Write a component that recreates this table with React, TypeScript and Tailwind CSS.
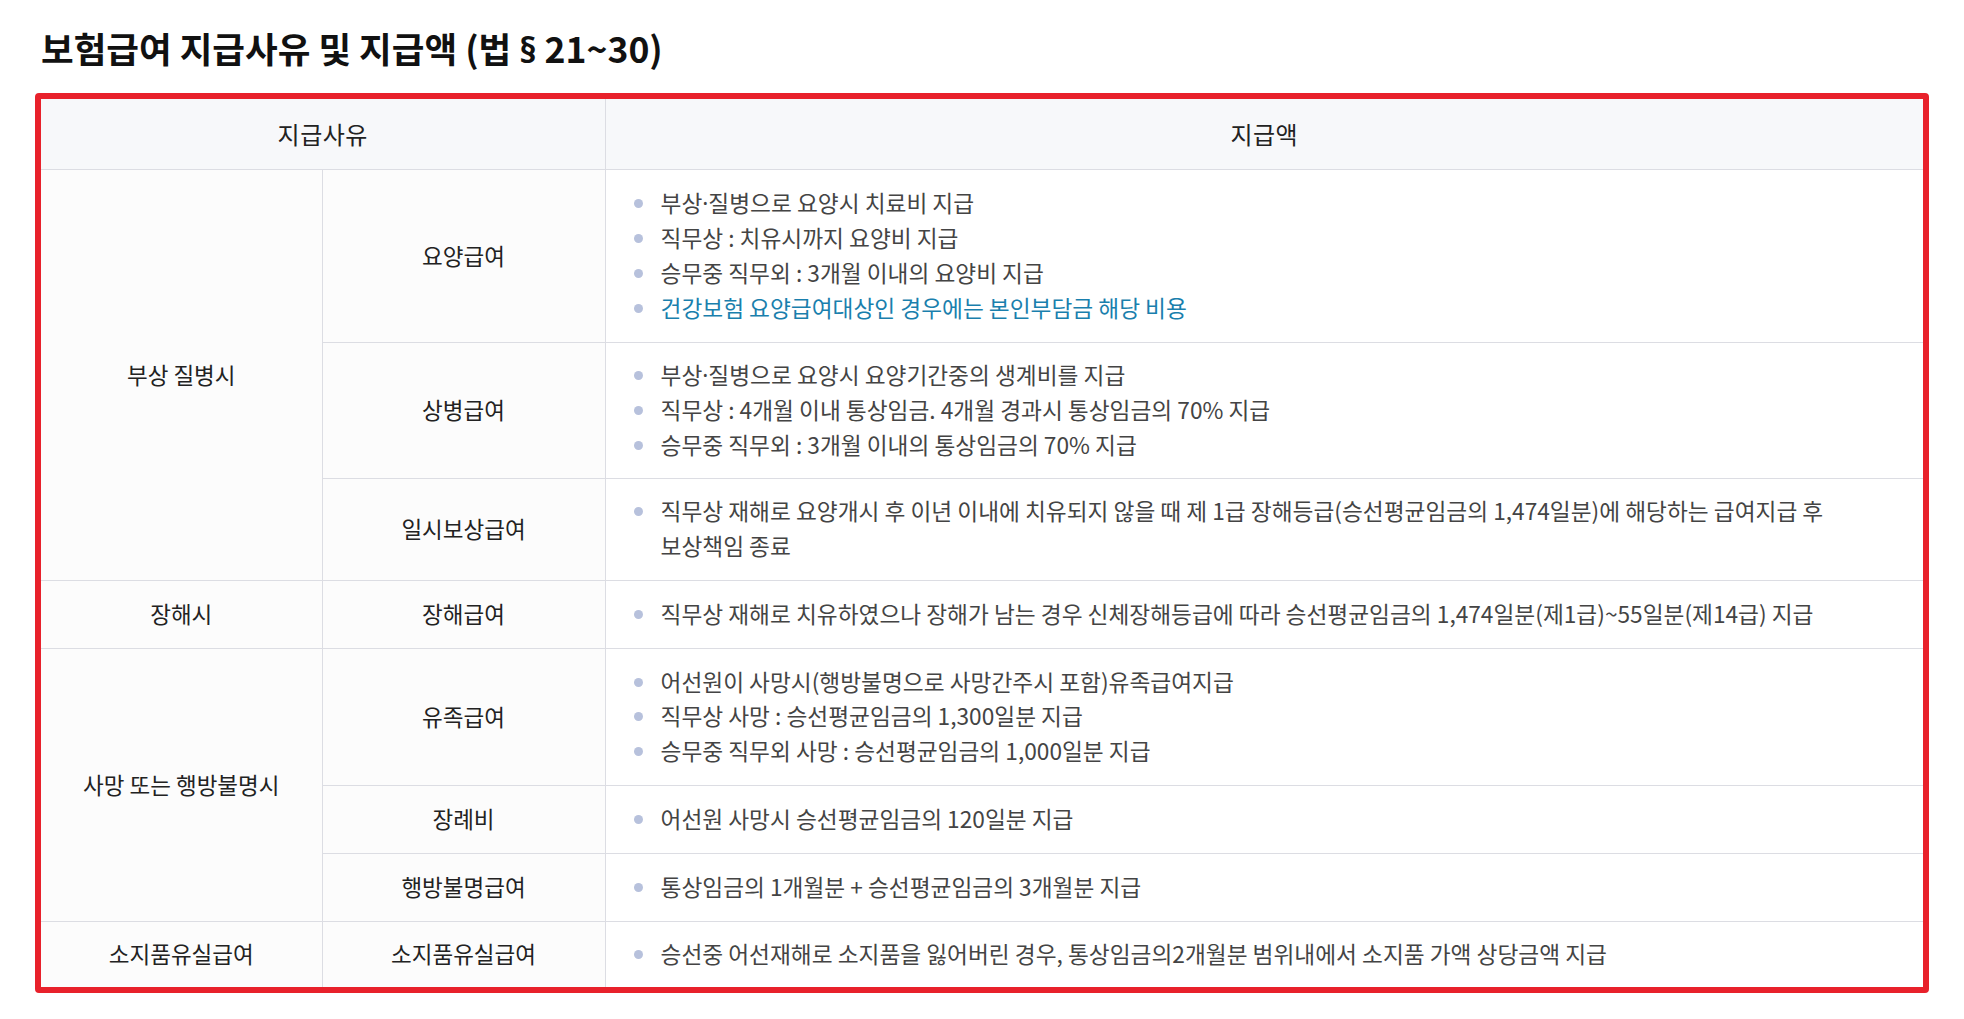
import React from 'react';

type Item = { text: React.ReactNode; blue?: boolean };

type Row = {
  group?: { label: string; span: number };
  name: string;
  height: string;
  items: Item[];
  last?: boolean;
};

// Noto CJK draws · and § full width; the reference sets them tight
const Dot = () => <span className="font-['Noto_Sans']">·</span>;

const rows: Row[] = [
  {
    group: { label: '부상 질병시', span: 3 },
    name: '요양급여',
    height: 'h-[173px]',
    items: [
      { text: <>부상<Dot />질병으로 요양시 치료비 지급</> },
      { text: '직무상 : 치유시까지 요양비 지급' },
      { text: '승무중 직무외 : 3개월 이내의 요양비 지급' },
      { text: '건강보험 요양급여대상인 경우에는 본인부담금 해당 비용', blue: true },
    ],
  },
  {
    name: '상병급여',
    height: 'h-[136px]',
    items: [
      { text: <>부상<Dot />질병으로 요양시 요양기간중의 생계비를 지급</> },
      { text: '직무상 : 4개월 이내 통상임금. 4개월 경과시 통상임금의 70% 지급' },
      { text: '승무중 직무외 : 3개월 이내의 통상임금의 70% 지급' },
    ],
  },
  {
    name: '일시보상급여',
    height: 'h-[102px]',
    items: [
      {
        text: (
          <>
            직무상 재해로 요양개시 후 이년 이내에 치유되지 않을 때 제 1급 장해등급(승선평균임금의 1,474일분)에 해당하는 급여지급 후
            <br />
            보상책임 종료
          </>
        ),
      },
    ],
  },
  {
    group: { label: '장해시', span: 1 },
    name: '장해급여',
    height: 'h-[68px]',
    items: [
      { text: '직무상 재해로 치유하였으나 장해가 남는 경우 신체장해등급에 따라 승선평균임금의 1,474일분(제1급)~55일분(제14급) 지급' },
    ],
  },
  {
    group: { label: '사망 또는 행방불명시', span: 3 },
    name: '유족급여',
    height: 'h-[137px]',
    items: [
      { text: '어선원이 사망시(행방불명으로 사망간주시 포함)유족급여지급' },
      { text: '직무상 사망 : 승선평균임금의 1,300일분 지급' },
      { text: '승무중 직무외 사망 : 승선평균임금의 1,000일분 지급' },
    ],
  },
  {
    name: '장례비',
    height: 'h-[68px]',
    items: [{ text: '어선원 사망시 승선평균임금의 120일분 지급' }],
  },
  {
    name: '행방불명급여',
    height: 'h-[68px]',
    items: [{ text: '통상임금의 1개월분 + 승선평균임금의 3개월분 지급' }],
  },
  {
    group: { label: '소지품유실급여', span: 1 },
    name: '소지품유실급여',
    height: 'h-[66px]',
    last: true,
    items: [{ text: '승선중 어선재해로 소지품을 잃어버린 경우, 통상임금의2개월분 범위내에서 소지품 가액 상당금액 지급' }],
  },
];

const labelCell =
  'bg-[#fcfcfc] border-r border-[#dcdde3] text-center align-middle text-[22.5px] text-[#222]';

export default function App() {
  return (
    <div
      className="min-h-screen bg-white px-[35px] pt-[26px]"
      style={{ fontFamily: '"Noto Sans CJK KR", "Noto Sans", sans-serif' }}
    >
      <h2 className="h-[44px] pl-[6px] text-[35.5px] font-bold leading-[44px] text-[#111]">
        보험급여 지급사유 및 지급액 (법 <span className="font-['Noto_Sans'] leading-none">§</span> 21~30)
      </h2>

      <div className="mt-[23px] overflow-hidden rounded-[4px] border-[6px] border-[#e8212b]">
        <table className="w-full table-fixed border-collapse">
          <colgroup>
            <col className="w-[281px]" />
            <col className="w-[283px]" />
            <col />
          </colgroup>
          <thead>
            <tr className="h-[70px] bg-[#f7f8fa]">
              <th
                colSpan={2}
                className="border-r border-b border-[#dcdde3] text-center text-[24px] font-normal tracking-[0.5px] text-[#222]"
              >
                지급사유
              </th>
              <th className="border-b border-[#dcdde3] text-center text-[24px] font-normal tracking-[0.5px] text-[#222]">
                지급액
              </th>
            </tr>
          </thead>
          <tbody>
            {rows.map((row) => (
              <tr key={row.name} className={row.height}>
                {row.group && (
                  <td
                    rowSpan={row.group.span}
                    className={`${labelCell} ${row.last ? '' : 'border-b'}`}
                  >
                    {row.group.label}
                  </td>
                )}
                <td className={`${labelCell} ${row.last ? '' : 'border-b'}`}>{row.name}</td>
                <td
                  className={`border-[#dcdde3] bg-white py-[15px] pl-[28px] pr-[20px] align-middle ${
                    row.last ? '' : 'border-b'
                  }`}
                >
                  <ul className="flex flex-col">
                    {row.items.map((item, i) => (
                      <li
                        key={i}
                        className={`flex items-start text-[22.7px] leading-[34.6px] ${
                          item.blue ? 'text-[#1a7fad]' : 'text-[#444]'
                        }`}
                      >
                        <span className="mt-[13px] mr-[18px] h-[9px] w-[9px] shrink-0 rounded-full bg-[#b7c1dc]" />
                        <span>{item.text}</span>
                      </li>
                    ))}
                  </ul>
                </td>
              </tr>
            ))}
          </tbody>
        </table>
      </div>
    </div>
  );
}
